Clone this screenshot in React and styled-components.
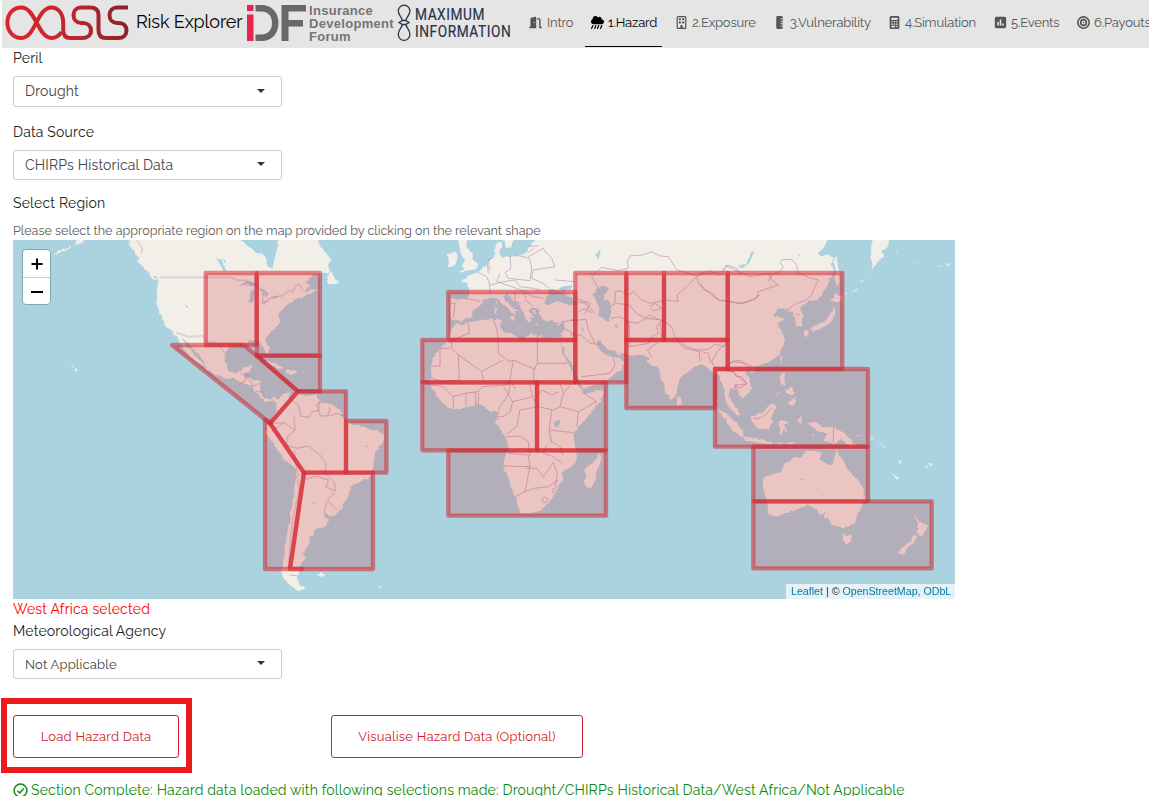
import React from "react";
import styled, { createGlobalStyle } from "styled-components";
import {
  FaDoorOpen, FaCloudShowersHeavy, FaRegBuilding, FaRulerVertical,
  FaCalculator, FaSquarePollVertical, FaBullseye,
} from "react-icons/fa6";

const Global = createGlobalStyle`
  * { box-sizing: border-box; }
  body { margin: 0; background: #fff; overflow: hidden; font-family: Raleway, Lato, sans-serif; color: #222; }
`;

const Page = styled.div`
  width: 1149px; height: 796px; overflow: hidden;
  display: flex; flex-direction: column;
`;
const Header = styled.header`
  height: 48px; flex: none; margin-left: 2px; background: #e5e5e5;
  display: flex; align-items: flex-start; overflow: hidden;
`;
const Logo = styled.svg`display: block; flex: none; margin-left: ${p => p.$ml || 0}px;`;
const Brand = styled.div`
  width: 107px; margin-left: 7px; padding-top: 10px; flex: none;
  font-size: 18px; line-height: 24px; letter-spacing: -0.12px; color: #000; white-space: nowrap;
`;
const ForumName = styled.div`
  width: 88px; flex: none; padding-top: 4px; margin-left: 3px; white-space: nowrap;
  font: bold 13px/13px "Liberation Sans", Arial, sans-serif; letter-spacing: 0.3px; color: #757575;
`;
const MaxName = styled.div`
  width: 99px; flex: none; padding-top: 6px; margin-left: 4px; white-space: nowrap;
  font: 400 16.8px/17px Roboto, sans-serif; color: #26334d;
  div { transform: scaleX(0.815); transform-origin: left; letter-spacing: 0.7px; -webkit-text-stroke: 0.2px #26334d; }
`;
const Nav = styled.nav`display: flex; flex: none; margin-left: 9px; height: 47px;`;
const Tab = styled.div`
  flex: none; width: ${p => p.$w}px; margin-right: ${p => p.$gap}px; padding: 0 0 2px ${p => p.$pl || 6}px;
  display: flex; align-items: center; white-space: nowrap;
  font-size: 13px; letter-spacing: -0.17px;
  color: ${p => (p.$active ? "#000" : "#555")};
  border-bottom: 1px solid ${p => (p.$active ? "#000" : "transparent")};
`;
const IconSlot = styled.span`
  width: ${p => p.$w}px; flex: none; display: flex;
  svg { height: 13px; width: auto; }
`;
const Main = styled.main`
  flex: 1; padding-left: 13px; display: flex; flex-direction: column; align-items: flex-start;
`;
const Label = styled.div`
  height: 20px; line-height: 20px; font-size: 14px; white-space: nowrap;
  letter-spacing: 0.18px; margin-top: ${p => p.$mt || 0}px; color: ${p => p.$c || "#222"};
`;
const Hint = styled.div`
  margin-top: 8px; height: 19px; line-height: 19px; font-size: 12.6px; letter-spacing: -0.02px; color: #5c5c5c; white-space: nowrap;
`;
const Select = styled.div`
  width: 269px; height: ${p => p.$h || 30}px; margin-top: ${p => p.$mt}px; padding: 0 16px ${p => p.$pb || 0}px 11px;
  border: 1px solid #ccc; border-radius: 3px; display: flex; align-items: center; justify-content: space-between;
  font-size: ${p => p.$fs || 14}px; letter-spacing: 0.17px; color: #444;
`;
const Caret = styled.span`
  border: 4px solid transparent; border-top-color: #333; border-bottom: 0; margin-bottom: ${p => p.$lift ?? 2}px;
`;
const MapFrame = styled.div`width: 942px; height: 359px; position: relative; background: #aad3df; flex: none;`;
const MapArt = styled.svg`display: block;`;
const Zoom = styled.div`
  position: absolute; left: 9px; top: 9px; width: 29px; height: 56px;
  border: 1px solid #84a9b6; border-radius: 4px; background: #fff; display: flex; flex-direction: column;
`;
const ZoomButton = styled.div`
  flex: 1; display: flex; align-items: center; justify-content: center; padding-top: 2px;
  & + & { border-top: 1px solid #ccc; }
`;
const Credits = styled.div`
  position: absolute; right: 0; bottom: 0; width: 169px; height: 15px; padding-left: 5px;
  background: rgba(255,255,255,.7); font: 10.65px/15px "Liberation Sans", Arial, sans-serif;
  color: #333; white-space: nowrap;
  a { color: #0078a8; }
`;
const Actions = styled.div`display: flex; margin: 19px 0 0 -12px; height: 76px;`;
const Highlight = styled.div`
  width: 191px; height: 75px; border: 6px solid #e81b1d; padding: 11px 6px; flex: none;
`;
const Button = styled.button`
  width: ${p => p.$w}px; height: 43px; display: block; padding: 0; background: #fff; color: #d4212d;
  border: 1px solid #d4212d; border-radius: 3px; font-family: inherit; font-size: 13px;
  letter-spacing: 0.21px;
`;
const Offset = styled.div`padding: 17px 0 0 139px;`;
const Complete = styled.div`
  margin-top: 6px; height: 20px; display: flex; align-items: center; gap: 3px; white-space: nowrap;
  color: #0a8a0a; font-size: 14px; letter-spacing: 0.17px;
`;

const americas = [
  "345,0 355,25 372,45 380,70 402,92 430,112 437,125 431,150 434,200 447,235 460,262 480,275 490,290 505,315 520,335 532,352 548,364 577,380 562,360 545,345 525,320 512,303 502,290 515,300 540,325 558,345 572,365 580,390 605,402 640,415 660,415 690,430 718,438 728,458 745,474 760,487 775,481 787,489 800,482 783,471 767,477 750,470 739,450 744,422 720,420 692,414 696,400 712,390 717,376 695,378 685,392 665,400 650,395 636,370 634,345 648,320 680,312 694,320 710,300 735,303 748,318 764,343 769,330 757,302 762,288 785,265 802,245 796,222 815,200 848,180 882,165 917,150 897,148 880,157 875,152 893,138 880,125 892,108 925,100 952,95 945,75 955,60 938,38 922,20 910,0 800,0 790,40 778,84 765,80 753,45 730,38 700,15 672,0",
  "940,112 952,95 962,108 975,126 965,136 944,128",
  "402,95 420,105 435,122 422,118", "345,5 360,22 352,18", "375,50 382,72 374,66",
  "748,364 772,364 800,378 817,385 797,387 768,371", "820,390 842,389 855,398 835,403 818,399", "783,400 796,402 788,404", "867,400 878,401 872,404",
  "186,383 198,388 191,398", "173,376 184,380 180,384", "158,367 165,371 160,375",
  "185,16 200,0 215,0 210,8", "150,27 172,18 168,26 145,36 120,46 130,36",
];
const southAmerica = [
  "150,92 160,85 172,96 185,75 210,65 205,82 230,68 255,78 290,74 300,95 330,102 357,115 370,145 400,165 435,172 465,180 490,192 492,208 482,228 465,245 460,290 445,328 410,337 390,352 385,380 355,425 340,437 313,430 312,440 325,450 316,470 285,478 280,495 264,498 271,512 262,535 244,548 257,562 248,580 238,602 233,626 240,647 260,654 236,664 210,645 190,625 184,605 192,560 196,530 205,470 218,400 225,340 225,295 190,265 165,225 138,192 140,170 155,150 170,120 168,97",
  "292,615 302,610 318,614 305,621", "470,644 486,653 480,655",
];
const west = [
  "430,0 400,5 385,20 383,38 350,48 320,52 302,46 285,38 282,20 290,10 304,5 307,16 300,28 300,42 286,42 278,50 270,58 262,70 248,84 235,97 215,103 204,108 197,116 184,120 188,127 201,128 208,150 205,176 175,178 152,173 150,200 155,218 152,236 170,240 185,246 198,238 215,230 219,208 235,200 248,190 246,180 262,178 280,170 294,174 302,188 325,205 342,230 348,222 341,212 356,214 335,200 316,182 309,166 320,160 335,178 358,194 366,210 370,225 385,247 394,244 390,230 402,236 385,210 400,203 418,206 420,218 425,235 440,245 455,240 470,248 492,243 493,265 485,290 465,292 440,293 410,285 394,280 385,288 370,300 340,285 310,275 300,260 303,240 290,237 250,240 210,247 185,256 168,248 155,270 148,290 130,315 105,340 92,375 95,410 90,430 95,445 115,475 135,495 160,508 200,502 235,493 255,497 270,512 290,515 296,530 288,550 305,570 318,590 325,625 315,650 308,675 325,710 335,750 350,785 360,820 385,822 420,812 445,790 470,755 472,740 490,720 485,700 505,685 530,665 530,645 525,620 520,580 535,560 565,530 600,485 610,450 580,455 555,462 545,450 525,420 510,380 490,340 478,307 488,320 500,350 520,380 540,425 550,442 580,435 615,420 640,400 650,376 650,0",
  "172,0 205,0 198,18 213,38 222,60 232,70 228,88 205,92 178,99 194,85 182,77 196,62 184,45 180,28",
  "144,45 165,34 173,45 168,72 142,83 147,65", "310,0 318,25 334,22 337,8 345,0",
  "325,232 346,230 340,240", "284,202 293,203 291,219 284,218", "286,182 292,184 290,196",
  "404,252 420,254 412,257", "468,254 482,250 476,258", "395,205 410,222 402,224",
  "598,638 605,655 596,685 585,720 574,744 560,742 551,725 556,705 552,688 580,667",
];
const middle = [
  "0,0 600,0 600,365 570,372 540,385 527,400 540,425 546,445 530,465 518,475 505,455 480,440 476,465 485,488 505,508 512,530 500,522 480,495 470,475 460,440 447,400 430,405 418,390 405,372 380,375 355,395 325,420 320,460 303,483 290,460 275,420 265,380 245,378 232,362 240,356 215,343 190,347 165,343 148,348 150,357 163,366 155,388 120,415 80,432 38,448 0,330",
  "320,468 334,478 335,492 324,497",
];
const east = [
  "0,0 392,0 370,25 353,40 365,50 380,42 400,55 396,75 400,98 390,120 375,150 352,180 328,182 300,204 310,225 307,258 290,262 286,240 280,217 260,214 250,210 258,205 238,208 220,224 240,232 255,238 232,250 250,280 253,310 235,345 210,365 165,380 142,386 137,402 155,430 150,455 125,477 110,455 90,443 86,465 100,495 118,532 95,512 78,485 70,440 55,400 0,370",
  "400,198 405,210 396,242 378,258 352,270 325,270 345,256 372,246 388,228", "403,152 412,165 430,172 415,187 395,185 393,178 402,174", "313,270 326,272 324,288 316,292", "333,272 347,268 342,277",
  "240,358 250,344 245,370", "150,385 167,380 164,397 153,401", "409,45 413,70 418,100 414,132 408,142 407,90 402,60",
  "520,0 510,40 516,88 530,68 552,50 548,32 565,15 570,0",
  "243,398 256,402 251,425 260,440 245,436 239,415", "258,448 275,440 285,458 276,468 262,462", "262,488 285,472 288,492 275,498",
  "218,482 240,452 236,462", "50,500 75,518 112,550 130,575 130,590 112,582 88,560 70,530",
  "155,530 185,520 205,498 220,488 230,500 215,525 218,545 205,572 172,565 160,550",
  "428,168 442,158 438,165", "450,158 468,144 466,150", "480,128 500,110 485,128", "588,35 594,38 590,41", "640,64 648,68 642,69", "710,77 724,77 722,81", "738,75 755,72 742,78",
];
const oceania = [
  "130,50 160,52 185,58 215,66 212,73 165,67 132,59", "225,67 250,68 242,73", "255,68 290,66 270,74", "260,80 280,72 298,65",
  "232,8 248,2 275,5 250,14 264,38 250,28 247,45 240,42 240,22", "320,10 338,4 352,8 368,22 400,20 432,38 450,58 476,80 442,78 425,56 408,70 370,63 382,42 350,32 340,20", "465,50 488,38 478,48", "295,0 303,-10 302,15", "335,45 342,40 340,50",
  "188,182 192,172 240,155 255,130 268,124 285,108 300,118 318,92 345,94 365,98 358,118 395,140 402,118 408,85 415,105 428,115 440,145 465,172 490,205 494,235 485,258 475,275 465,310 450,315 430,322 395,315 385,290 375,296 370,286 378,272 360,287 348,265 320,256 272,276 230,287 205,286 203,250 190,208",
  "427,343 440,348 456,343 453,362 440,376 431,362", "640,282 656,302 684,317 675,337 662,351 650,336 655,310", "640,345 652,347 640,372 622,385 612,405 594,400 602,386 628,366",
  "574,160 598,175 592,179", "592,118 605,125 602,132", "675,140 687,136 680,146", "685,130 697,130 688,135", "507,45 520,56 513,55", "527,58 560,84 548,78",
];

const watersNA = [
  "680,135 705,122 730,130 735,140 710,138", "710,185 712,155 722,148 726,160 718,190", "735,145 752,148 768,158 760,170 750,158", "748,190 765,183 772,180 755,195", "770,178 792,168 795,174", "516,193 526,200 520,204", "612,52 622,58 640,92 632,94 618,72", "628,55 638,62 636,72",
];
const watersSA = ["276,396 284,396 282,402", "434,230 448,224 440,232"];
const watersMid = [
  "70,162 82,143 98,137 116,141 115,154 102,164 105,178 120,192 125,205 119,242 100,238 85,225 88,205 78,182",
  "505,80 525,76 545,45 550,28 551,45 535,72 518,84", "78,45 88,30 92,38 84,58", "134,254 143,254 138,267", "45,180 53,196 48,192", "37,255 44,270 38,278",
  "80,305 92,304 112,328 134,334 146,346 165,340 165,350 146,354 130,352 118,348 98,340 84,322",
];
const watersWest = [
  "433,190 440,168 450,148 462,146 475,156 492,158 520,178 530,192 510,197 480,185 455,190 442,197", "472,150 485,140 518,134 512,148 490,156",
  "462,545 480,543 478,560 464,560", "444,572 448,590 455,606 450,604", "482,620 490,648 484,640",
];
const watersEast = ["116,80 133,76 150,50 160,28 161,42 144,72 128,84", "292,45 304,40 298,48"];
const watersOceania = ["302,177 309,178 305,181", "365,224 372,225 368,230"];

const bordersNA = "M440,112H655L668,120 700,122 735,140 750,160 748,190 775,172 805,168 828,152 840,155 848,136 860,132 870,154M490,277 525,290 568,288 582,305 610,308 635,338M370,0 388,25 385,40M683,402 700,405 695,425 680,430M700,405 712,405M708,420 722,438 742,430M728,455 750,455M765,470 790,490";
const bordersSA = "M215,65 208,85 235,105 242,138 268,142 275,125 295,122 300,92M300,92 290,108 302,138 325,138 330,110M330,138 350,130 372,138M222,135 225,180 190,158 150,160M155,185 188,160M225,180 202,200 200,225 230,235 265,228 300,255 318,280 316,310 345,340 345,362 318,352 325,330 285,318 258,328 232,310 222,240M345,365 320,395 312,430M325,395 352,420M230,315 238,360 222,430 212,500 205,600M210,615 235,618";
const bordersWest = "M152,190 165,190 160,235M205,176 240,184M235,97 260,110 268,130 270,160M262,70 265,100M283,50 265,60 270,90M330,48 333,85 315,98 325,115 355,118 390,122 395,85 388,55 350,45M270,135 310,125 345,120 360,140 400,145 420,150M300,100 290,125 320,135 350,145 370,155 378,175M400,25 385,38M383,18H415M385,50 430,25 440,40 455,55 465,80 400,90M400,90 395,115 430,130 447,145M362,150 400,170 430,175M345,150 345,185 362,190M375,178 400,200M280,240 290,265 295,300 295,340 330,365 340,360 405,388M412,285V370H500M412,370 402,390 400,425M205,250 208,280 155,300V325L175,345 245,395 310,360M92,378H120V325H150M175,345 178,420 130,425 95,415M245,395 252,425M340,360 330,420 345,445M95,435 130,440 160,470 195,460 235,455 245,440 320,435 330,420M160,470 160,505M198,460V500M225,458 228,495M235,460 235,495M330,430 325,465 300,500 292,525M310,440 338,485 398,470 388,430M398,470 415,500 460,510 480,500M338,485 330,515 310,530 292,530M360,510 350,560 320,582M360,510 415,500M405,480 425,450 455,465 478,455M480,430 490,460 480,500 535,515 530,560M490,460 520,425M545,455 590,485 535,515M320,590 360,588 385,605 390,650M325,640 385,645 390,680 310,678M390,678 375,755 345,770M375,755 400,745 445,740 475,720M380,685 410,685 430,710 460,668M460,668 472,700 465,745M455,510 448,570 520,578M448,570 455,605 480,620 487,640M440,615 430,640 460,650 488,670M426,780 434,770 444,776 440,786 430,788ZM455,752 461,745 467,752 461,760ZM465,120 525,125M490,245 525,240M525,175 570,190 555,220M490,265 530,285";
const bordersMid = "M65,110 95,82 145,92 175,85 172,65 180,48 215,45 245,36 270,48 295,50 320,90 350,98 380,108 385,130 405,150 445,180 510,190 545,180 570,165M65,110 82,140M120,200 135,190V155L150,152 175,165 190,155 215,180 240,190 290,180 325,185 320,165 350,140 380,110M140,190 178,195 200,220 225,235 240,225 270,240M120,235 150,230 178,245 200,250 230,235 275,240M178,245 180,320 235,310 245,290 265,280 260,260 275,240M275,240 305,260 315,290 345,318 380,330 415,328 435,312 465,320M245,350 232,330 260,310 275,290 270,250M318,300 345,325 388,335M388,335 390,365M395,335 415,340 422,368M470,310 445,330 425,365 435,385M460,385 490,365 530,370 555,385M480,390 500,405 530,430 510,445 495,435 505,460M0,240 30,240 48,237 55,270 75,310M35,410 80,405 120,400 135,375 130,355M20,185 45,190 60,205 75,220M25,215 45,205 65,218M0,285 35,285 60,310 85,313M240,200 255,190 275,205 250,212 240,205M455,95 470,75 500,85 510,105M380,108 410,100 455,95";
const bordersEast = "M0,100 30,92 60,105 70,95 80,78 105,90 125,98 150,110 205,100 215,120 235,135 205,145 175,155 170,175 125,192 80,182 60,182 30,155 15,150 0,130M205,125 215,105 240,95 250,80 240,68 245,60 275,58 290,75 295,98 325,112 355,120 345,140 335,165 320,180 290,190 260,210M285,222 300,225M85,370 105,362 125,362 135,375 150,382M70,390 100,395 110,410 125,410 140,430M105,455 105,435 140,432M160,535 180,535 195,525 215,505";

const pieces = [
  { x: 13, y: 240, shapes: americas, waters: watersNA, borders: bordersNA },
  { x: 220, y: 370, shapes: southAmerica, waters: watersSA, borders: bordersSA },
  { x: 570, y: 240, shapes: middle, waters: watersMid, borders: bordersMid },
  { x: 400, y: 240, shapes: west, waters: watersWest, borders: bordersWest },
  { x: 700, y: 240, shapes: east, waters: watersEast, borders: bordersEast },
  { x: 700, y: 420, shapes: oceania, waters: watersOceania, borders: "M400,22V70" },
];

const regions = [
  "205.7,273 256.7,273 256.7,345 205.7,345", "256.7,273 320,273 320,355.7 256.7,355.7",
  "172,345 244,345 256.7,355.7 298,391.3 270,423.3", "256.7,355.7 320,355.7 320,391.3 298,391.3",
  "298,391.3 346,391.3 346,472.7 304,472.7 270,423.3", "346,421 386.5,421 386.5,472.7 346,472.7",
  "265,419.5 270,423.3 304,472.7 290,569 302,569 265,569", "304,472.7 373,472.7 373,569 290,569",
  "448.3,292 575.3,292 575.3,340 448.3,340", "422.3,340 575.3,340 575.3,382.3 422.3,382.3",
  "422.3,382.3 537,382.3 537,450.3 422.3,450.3", "537,382.3 606,382.3 606,450.3 537,450.3",
  "448.3,450.3 606,450.3 606,515.7 448.3,515.7", "575.3,273 626.3,273 626.3,382.3 575.3,382.3",
  "626.3,273 664,273 664,340 626.3,340", "664,273 727.7,273 727.7,340 664,340",
  "727.7,273 842.3,273 842.3,369 727.7,369", "626.3,340 727.7,340 727.7,369 715,369 715,408 626.3,408",
  "715,369 868,369 868,446.7 715,446.7", "753.3,446.7 868,446.7 868,501.3 753.3,501.3",
  "753.3,501.3 931.7,501.3 931.7,568.3 753.3,568.3",
];

const place = ({ x, y }) => `translate(${x} ${y}) scale(0.33333)`;

// Land that touches the top of the map continues past it, so the rough coast filter leaves no gaps there.
const bleed = points => points.replace(/,0(?= |$)/g, ",-14");

function WorldMap() {
  return (
    <MapArt width="942" height="359" viewBox="13 240 942 359">
      <defs>
        <filter id="coast" filterUnits="userSpaceOnUse" x="13" y="230" width="942" height="379" colorInterpolationFilters="sRGB">
          <feTurbulence type="fractalNoise" baseFrequency="0.16" numOctaves="2" seed="4" result="n" />
          <feDisplacementMap in="SourceGraphic" in2="n" scale="3.5" xChannelSelector="R" yChannelSelector="G" />
        </filter>
      </defs>
      <g filter="url(#coast)">
        {pieces.map((p, i) => (
          <g key={i} transform={place(p)} fill="#f2efe9">
            {p.shapes.map((s, j) => <polygon key={j} points={p.y === 240 ? bleed(s) : s} />)}
          </g>
        ))}
        {pieces.map((p, i) => (
          <g key={i} transform={place(p)} fill="#aad3df">{p.waters.map((s, j) => <polygon key={j} points={s} />)}</g>
        ))}
      </g>
      {pieces.map((p, i) => (
        <path key={i} transform={place(p)} d={p.borders} fill="none" stroke="#b98eae" strokeOpacity=".75" strokeWidth="2.5" strokeLinejoin="round" />
      ))}
      {regions.map((r, i) => (
        <polygon key={i} points={r} fill="#d41f29" fillOpacity=".2" stroke="#d41f29" strokeOpacity=".52" strokeWidth="4.3" strokeLinejoin="round" />
      ))}
    </MapArt>
  );
}

const tabs = [
  { t: "Intro", I: FaDoorOpen, w: 57, gap: 5, iw: 18 },
  { t: "1.Hazard", I: FaCloudShowersHeavy, w: 77, gap: 9, iw: 17, active: true },
  { t: "2.Exposure", I: FaRegBuilding, w: 94, gap: 5, pl: 4, iw: 17 },
  { t: "3.Vulnerability", I: FaRulerVertical, w: 110, gap: 4, pl: 3, iw: 17 },
  { t: "4.Simulation", I: FaCalculator, w: 100, gap: 5, pl: 4, iw: 17 },
  { t: "5.Events", I: FaSquarePollVertical, w: 77, gap: 5, pl: 5, iw: 17 },
  { t: "6.Payouts", I: FaBullseye, w: 90, gap: 0, pl: 6, iw: 17 },
];

export default function App() {
  return (
    <Page>
      <Global />
      <Header>
        <Logo $ml={3} width="124" height="46" viewBox="5 0 124 46">
          <defs>
            <linearGradient id="oasisRed" gradientUnits="userSpaceOnUse" x1="6" y1="0" x2="128" y2="0">
              <stop offset="0" stopColor="#e0242c" /><stop offset=".5" stopColor="#c1272d" /><stop offset="1" stopColor="#8c222a" />
            </linearGradient>
          </defs>
          <path fill="none" stroke="url(#oasisRed)" strokeWidth="4" strokeLinejoin="round" d="M61.500 32C59 36 55.500 38 51.500 38C38 38 35.500 7.500 21.500 7.500C12.500 7.500 7.400 14.500 7.400 22.700C7.400 31 13 38 21.500 38C35.500 38 37 7.500 51.500 7.500C58.500 7.500 63.200 14 63.200 22.700V30C63.200 35.500 66 38 70.500 38H82C87.500 38 91 35 91 30.500C91 26 87.500 22.900 83 22.900H81C76.500 22.900 73.500 19.500 73.500 15C73.500 10.500 76.500 7.500 81 7.500H90C95.500 7.500 98.500 10 98.500 15V30C98.500 35.500 101.500 38 106 38H118C123.500 38 126.500 35 126.500 30.500C126.500 26 123.500 22.900 119 22.900H117C112.500 22.900 109.500 19.500 109.500 15C109.500 10.500 112.500 7.500 117 7.500H128" />
        </Logo>
        <Brand>Risk Explorer</Brand>
        <Logo $ml={4} width="59" height="46" viewBox="247 0 59 46">
          <path d="M247 5h6.500v6h-6.500zM247 14.500h6.500V41h-6.500z" fill="#ea2450" />
          <path d="M255.500 5h6c10 0 17 7 17 18s-7 18-17 18h-6v-6.500h6c6 0 10.500-4 10.500-11.500S267.500 11.500 261.500 11.500h-6zM281.500 5H306v6.500h-17.500V20H303v6.500h-14.500V41h-7z" fill="#686868" />
        </Logo>
        <ForumName>Insurance<br />Development<br />Forum</ForumName>
        <Logo $ml={0} width="14" height="46" viewBox="397 0 14 46">
          <g fill="none" stroke="#26334d" strokeWidth="1.3">
            <path d="M402.500 20.500C401.500 17 398.300 15 398.300 11A5.800 5.800 0 0 1 409.900 11C409.900 15 406.700 17 405.700 20.500M402.500 24.500C401.500 28 398.300 30 398.300 34.500A5.800 5.800 0 0 0 409.900 34.500C409.900 30 406.700 28 405.700 24.500" />
            <path d="M399 22.500L402.500 20.500H405.700L409 22.500L405.700 24.500H402.500Z" />
          </g>
        </Logo>
        <MaxName><div>MAXIMUM</div><div>INFORMATION</div></MaxName>
        <Nav>
          {tabs.map(({ t, I, w, gap, iw, pl, active }) => (
            <Tab key={t} $w={w} $gap={gap} $pl={pl} $active={active}><IconSlot $w={iw}><I /></IconSlot>{t}</Tab>
          ))}
        </Nav>
      </Header>
      <Main>
        <Label>Peril</Label>
        <Select $mt={8} $h={31} $pb={1}>Drought<Caret $lift={0} /></Select>
        <Label $mt={15}>Data Source</Label>
        <Select $mt={8}>CHIRPs Historical Data<Caret /></Select>
        <Label $mt={13}>Select Region</Label>
        <Hint>Please select the appropriate region on the map provided by clicking on the relevant shape</Hint>
        <MapFrame>
          <WorldMap />
          <Zoom>
            <ZoomButton><svg width="12" height="12"><path d="M6 0.500V11.500M0.500 6H11.500" stroke="#000" strokeWidth="2" /></svg></ZoomButton>
            <ZoomButton><svg width="12" height="12"><path d="M0 6H12" stroke="#000" strokeWidth="2" /></svg></ZoomButton>
          </Zoom>
          <Credits><a>Leaflet</a> | © <a>OpenStreetMap, ODbL</a></Credits>
        </MapFrame>
        <Label $c="#f00">West Africa selected</Label>
        <Label $mt={2}>Meteorological Agency</Label>
        <Select $mt={8} $fs={13}>Not Applicable<Caret /></Select>
        <Actions>
          <Highlight><Button $w={166}>Load Hazard Data</Button></Highlight>
          <Offset><Button $w={252}>Visualise Hazard Data (Optional)</Button></Offset>
        </Actions>
        <Complete>
          <svg width="15" height="15" viewBox="0 0 15 15" fill="none" stroke="#0a8a0a" strokeWidth="1.5"><circle cx="7.500" cy="7.500" r="6.400" /><path d="M4.300 7.700L6.700 10L10.800 5.400" /></svg>
          Section Complete: Hazard data loaded with following selections made: Drought/CHIRPs Historical Data/West Africa/Not Applicable
        </Complete>
      </Main>
    </Page>
  );
}
